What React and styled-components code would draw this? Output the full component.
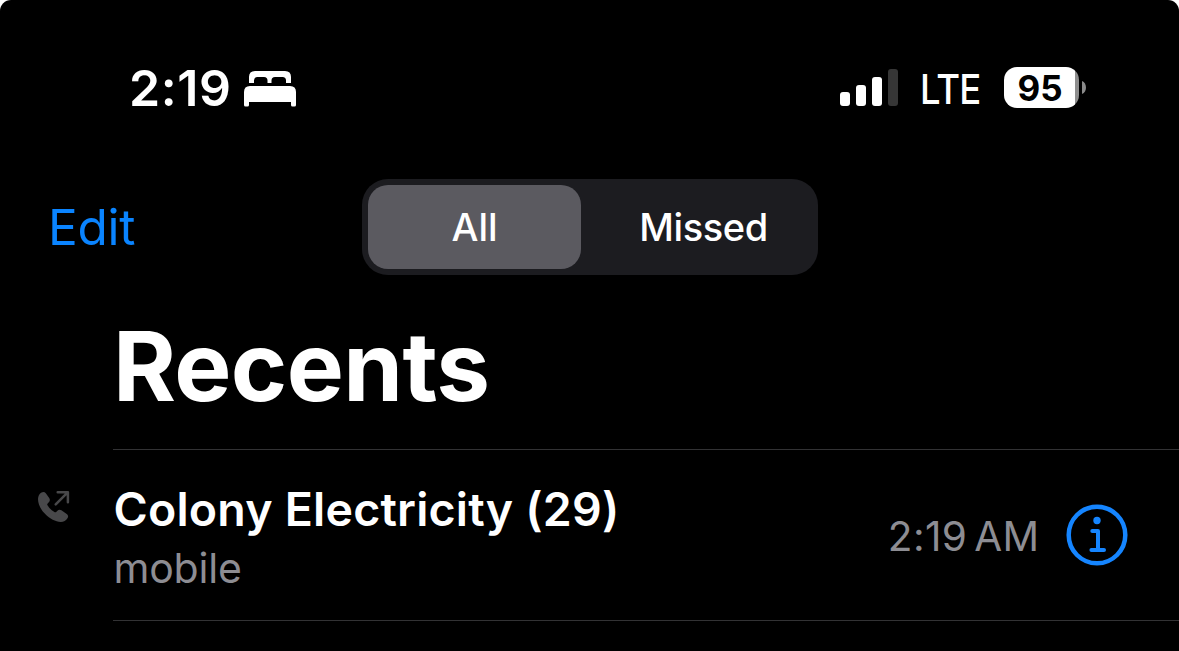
import React from "react";
import styled, { createGlobalStyle } from "styled-components";

const GlobalStyle = createGlobalStyle`
  * { box-sizing: border-box; }
  body { margin: 0; background: #fff; }
`;

const Screen = styled.div`
  width: 1179px;
  height: 651px;
  overflow: hidden;
  background: #000;
  border-radius: 11px 11px 0 0;
  color: #fff;
  font-family: Inter, "Liberation Sans", sans-serif;
`;

const Label = styled.span`
  display: block;
  white-space: nowrap;
  line-height: ${(p) => p.$line || 50}px;
  font-size: ${(p) => p.$size}px;
  font-weight: ${(p) => p.$weight || 400};
  letter-spacing: ${(p) => p.$track || 0}px;
  word-spacing: ${(p) => p.$word || 0}px;
  color: ${(p) => p.$color || "inherit"};
`;

const StatusBar = styled.header`
  height: 175px;
  padding: 0 93px 0 129px;
  display: flex;
  align-items: center;
  justify-content: space-between;
`;

const TimeGroup = styled.div`
  display: flex;
  align-items: center;
  width: 167px;
  padding-top: 1px;
  svg { display: block; margin-left: auto; }
`;

const Indicators = styled.div`
  display: flex;
  align-items: center;
  width: 246px;
  svg { display: block; }
`;

const Network = styled.div`
  width: 83px;
  margin-left: 22px;
  padding-top: 3px;
  transform: scaleX(0.89);
  transform-origin: left;
`;

const Battery = styled.div`
  display: flex;
  align-items: center;
  gap: 3px;
  margin-left: 0.5px;
`;

const BatteryBody = styled.div`
  width: 75px;
  height: 41px;
  padding: 1px 0 0 14px;
  display: flex;
  align-items: center;
  border-radius: 13px;
  color: #000;
  background: linear-gradient(to right, #fff 71px, #8e8e8e 71px);
`;

const Nav = styled.nav`
  display: grid;
  grid-template-columns: 314px 456px;
  align-items: center;
  padding-left: 48px;
  margin-top: 4px;
`;

const Segments = styled.div`
  display: grid;
  grid-template-columns: 213px 1fr;
  height: 96px;
  padding: 6px;
  border-radius: 26px;
  background: #1c1c20;
`;

const Segment = styled.button`
  display: flex;
  align-items: center;
  justify-content: center;
  border: 0;
  padding: 0 0 0 ${(p) => (p.$active ? 0 : 14)}px;
  font-family: inherit;
  color: #fff;
  border-radius: 20px;
  background: ${(p) => (p.$active ? "#5b5a60" : "transparent")};
`;

const Title = styled.h1`
  margin: 33px 0 0 113px;
  height: 141px;
  font-size: 96px;
  font-weight: 700;
  line-height: 116px;
  letter-spacing: -0.6px;
`;

const CallList = styled.section`
  margin-left: 113px;
  border-top: 1px solid #323234;
`;

const CallRow = styled.article`
  display: flex;
  align-items: center;
  height: 171px;
  margin-left: -113px;
  padding-right: 51.5px;
  background: linear-gradient(#323234, #323234) 113px 100% / 100% 1px no-repeat;
`;

const Direction = styled.div`
  width: 113px;
  height: 170px;
  padding: 39px 0 0 36px;
`;

const Caller = styled.div`
  flex: 1;
  padding: 4px 0 0 0.5px;
`;

const CallTime = styled.time`
  padding-top: 2px;
`;

const InfoButton = styled.button`
  border: 0;
  padding: 0 0 1px;
  margin-left: 26px;
  background: none;
  svg { display: block; }
`;

const BedIcon = () => (
  <svg width="52" height="37" viewBox="0 -1 52 37" fill="#fff">
    <path d="M5 12V6Q5 0 11 0H41Q47 0 47 6V12H42V9.5Q42 6 38.500 6H31Q27.500 6 27.500 9.500V12H23.500V9.500Q23.500 6 20 6H13.500Q10 6 10 9.500V12Z" />
    <path d="M0 21Q0 15 6 15H46Q52 15 52 21V34Q52 35.500 50.500 35.500H48.500Q47 35.500 47 34V31H5V34Q5 35.500 3.500 35.500H1.500Q0 35.500 0 34Z" />
  </svg>
);

const SignalIcon = () => (
  <svg width="58" height="37" viewBox="0 0 58 37" fill="#fff">
    <rect x="0" y="23" width="10" height="14" rx="3" />
    <rect x="16" y="16" width="10" height="21" rx="3" />
    <rect x="32" y="8" width="10" height="29" rx="3" />
    <rect x="48" y="0" width="10" height="37" rx="3" fill="#363636" />
  </svg>
);

const BatteryTip = () => (
  <svg width="4" height="13" viewBox="0 0 4 13">
    <path d="M0 0C5.300 2 5.300 11 0 13Z" fill="#8a8a8a" />
  </svg>
);

const OutgoingIcon = () => (
  <svg width="34" height="34" viewBox="0 0 34 34" fill="none">
    <path
      d="M2 9C2 6 3.500 3.700 5.500 2.500C7 1.700 8.700 1.800 9.800 3.200L13.200 8.100C14.200 9.600 14 11 12.800 12.200L11.700 13.400C11.100 14 11.100 14.700 11.500 15.300C13 17.900 15.600 20.500 18.400 22.100C19 22.500 19.700 22.400 20.200 21.900L21.400 20.700C22.600 19.500 24 19.400 25.400 20.300L30.700 23.900C32.200 25 32.500 26.600 31.600 28.100C30.100 30.600 27.600 32 24.700 32C19.500 32 13.800 28.700 9.200 24.100C4.700 19.600 2 14.200 2 9Z"
      fill="#48484a"
    />
    <path d="M19.700 14.300L31.200 2.900M21.700 2.300H31.900V12.300" stroke="#48484a" strokeWidth="2.500" strokeLinecap="round" strokeLinejoin="round" />
  </svg>
);

const InfoIcon = () => (
  <svg width="62" height="62" viewBox="0 0 62 62" fill="none">
    <circle cx="31" cy="31" r="28.300" stroke="#1585ff" strokeWidth="4.500" />
    <circle cx="31" cy="16.500" r="3.700" fill="#1585ff" />
    <path d="M26.300 27H32V46M25.400 46H38" stroke="#1585ff" strokeWidth="4" strokeLinecap="round" strokeLinejoin="round" />
  </svg>
);

export default function App() {
  return (
    <Screen>
      <GlobalStyle />
      <StatusBar>
        <TimeGroup>
          <Label $size={50} $weight={600} $track={0.6}>2:19</Label>
          <BedIcon />
        </TimeGroup>
        <Indicators>
          <SignalIcon />
          <Network>
            <Label $size={41} $weight={500} $track={-1}>LTE</Label>
          </Network>
          <Battery>
            <BatteryBody>
              <Label $size={35} $weight={700} $line={41}>95</Label>
            </BatteryBody>
            <BatteryTip />
          </Battery>
        </Indicators>
      </StatusBar>
      <Nav>
        <Label $size={49.5} $track={-0.3} $color="#0a84ff">Edit</Label>
        <Segments>
          <Segment $active>
            <Label $size={38} $weight={500}>All</Label>
          </Segment>
          <Segment>
            <Label $size={38} $weight={500} $track={-0.4}>Missed</Label>
          </Segment>
        </Segments>
      </Nav>
      <Title>Recents</Title>
      <CallList>
        <CallRow>
          <Direction>
            <OutgoingIcon />
          </Direction>
          <Caller>
            <Label $size={46.5} $weight={600} $line={60} $track={0.2}>Colony Electricity (29)</Label>
            <Label $size={41} $line={58} $track={-0.2} $color="#8d8d93">mobile</Label>
          </Caller>
          <CallTime>
            <Label $size={40.5} $track={0.4} $word={-5} $color="#8d8d93">2:19 AM</Label>
          </CallTime>
          <InfoButton aria-label="Call details">
            <InfoIcon />
          </InfoButton>
        </CallRow>
      </CallList>
    </Screen>
  );
}
